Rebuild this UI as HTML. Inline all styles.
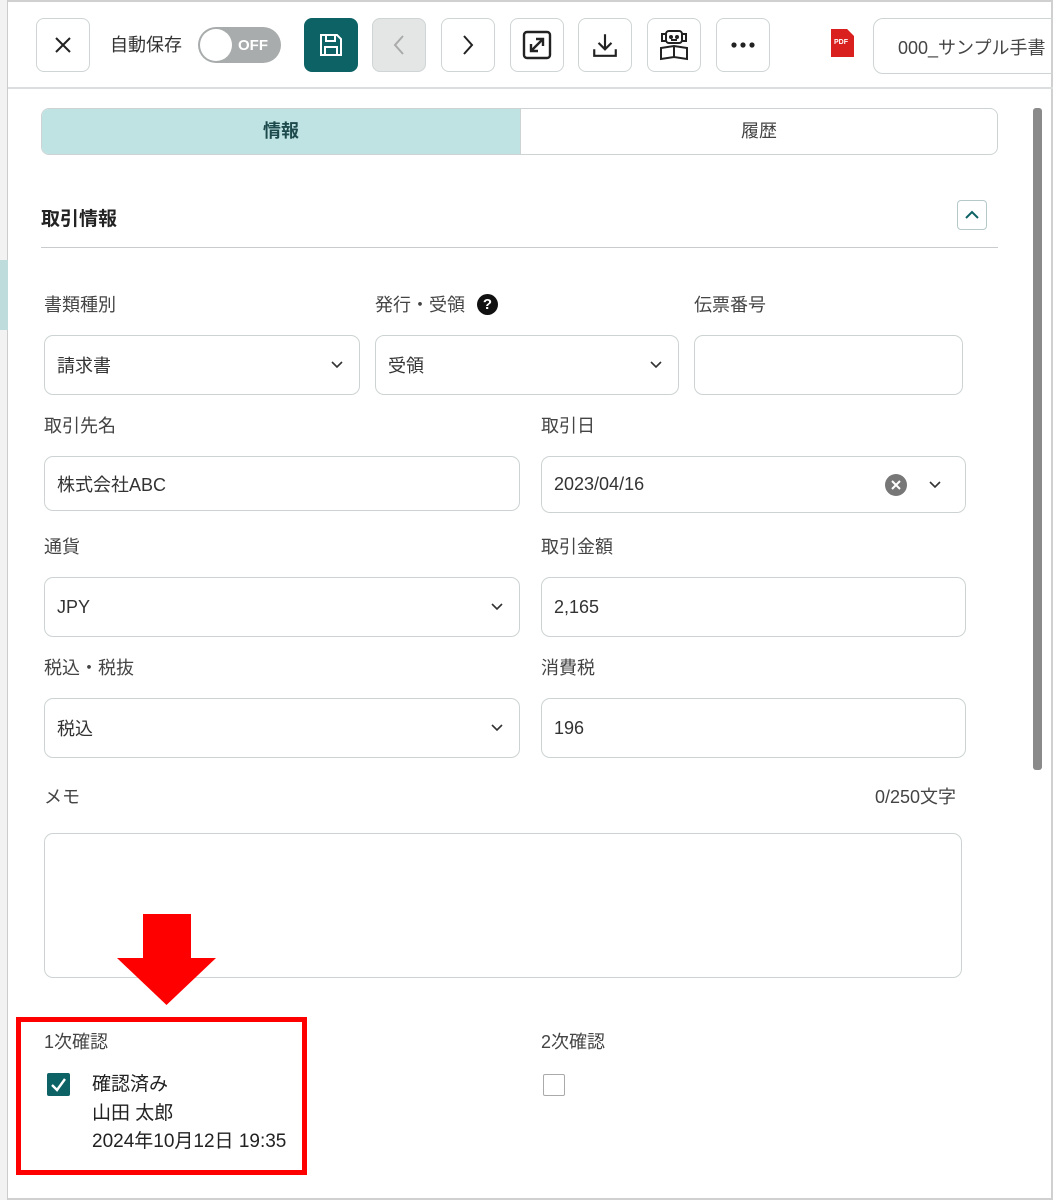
<!DOCTYPE html>
<html><head><meta charset="utf-8"><style>
*{box-sizing:border-box;margin:0;padding:0}
body{width:1053px;height:1200px;overflow:hidden;background:#fff;font-family:"Liberation Sans","Noto Sans CJK JP",sans-serif;color:#333;position:relative}
.a{position:absolute}
.btn{position:absolute;top:18px;width:54px;height:54px;border:1px solid #cfd4d4;border-radius:8px;background:#fff;display:flex;align-items:center;justify-content:center}
.lbl{position:absolute;font-size:18px;color:#444;line-height:1}
.inp{position:absolute;border:1px solid #cdd3d3;border-radius:9px;background:#fff;font-size:18px;color:#333;padding-left:12px;display:flex;align-items:center}
.chev{position:absolute;right:16px;top:50%;margin-top:-6px}
</style></head><body>
<div class="a" style="left:0;top:0;width:1053px;height:1200px;border:2px solid #d0d0d0;border-left:none"></div>
<div class="a" style="left:0;top:0;width:8px;height:1200px;background:#f2f2f2;border-right:1px solid #ccc"></div>
<div class="a" style="left:0;top:260px;width:8px;height:70px;background:#bfdcdc"></div>

<div class="btn" style="left:36px"><svg width="20" height="20" viewBox="0 0 20 20"><path d="M3 3L17 17M17 3L3 17" stroke="#222" stroke-width="2"/></svg></div>
<div class="lbl" style="left:110px;top:36px;color:#333">自動保存</div>
<div class="a" style="left:198px;top:27px;width:83px;height:36px;border-radius:18px;background:#a9acac"></div>
<div class="a" style="left:200px;top:29px;width:32px;height:32px;border-radius:50%;background:#fff"></div>
<div class="a" style="left:238px;top:37px;color:#fff;font-size:15px;font-weight:bold">OFF</div>
<div class="btn" style="left:304px;background:#0d6265;border-color:#0d6265"><svg width="26" height="26" viewBox="0 0 26 26" fill="none" stroke="#fff" stroke-width="2"><path d="M3 3H19L23 7V23H3Z"/><path d="M8 3V9H17V3"/><path d="M7 23V15H19V23"/></svg></div>
<div class="btn" style="left:372px;background:#e4e6e6"><svg width="14" height="22" viewBox="0 0 14 22"><path d="M11 2L3 11L11 20" stroke="#aaa" stroke-width="2" fill="none"/></svg></div>
<div class="btn" style="left:441px"><svg width="14" height="22" viewBox="0 0 14 22"><path d="M3 2L11 11L3 20" stroke="#222" stroke-width="2" fill="none"/></svg></div>
<div class="btn" style="left:510px"><svg width="30" height="30" viewBox="0 0 30 30" fill="none" stroke="#222" stroke-width="2.4"><rect x="2" y="2" width="26" height="26" rx="3"/><path d="M9 21L21 9M14 9H21V16M9 14V21H16"/></svg></div>
<div class="btn" style="left:578px"><svg width="28" height="28" viewBox="0 0 26 26" fill="none" stroke="#222" stroke-width="2"><path d="M13 3V17M7 11L13 17L19 11M3 17V23H23V17"/></svg></div>
<div class="btn" style="left:647px"><svg width="32" height="34" viewBox="0 0 32 34" fill="none" stroke="#222" stroke-width="2"><rect x="8" y="3" width="16" height="12" rx="3"/><rect x="4" y="6" width="4" height="7"/><rect x="24" y="6" width="4" height="7"/><circle cx="13" cy="9" r="1" fill="#222"/><circle cx="19" cy="9" r="1" fill="#222"/><path d="M13 12H19M3 20L16 18L29 20V31L16 29L3 31ZM16 18V29"/></svg></div>
<div class="btn" style="left:716px"><svg width="24" height="6" viewBox="0 0 24 6"><circle cx="3" cy="3" r="2.6" fill="#222"/><circle cx="12" cy="3" r="2.6" fill="#222"/><circle cx="21" cy="3" r="2.6" fill="#222"/></svg></div>
<div class="a" style="left:831px;top:29px;width:23px;height:28px;background:#d9201f;clip-path:polygon(0 0,70% 0,100% 25%,100% 100%,0 100%)"></div>
<div class="a" style="left:834px;top:39px;color:#fff;font-size:7px;font-weight:bold">PDF</div>
<div class="a" style="left:873px;top:18px;width:200px;height:56px;border:1px solid #cfd4d4;border-radius:10px;padding:15px 0 0 24px;font-size:18px;color:#444;white-space:nowrap">000_サンプル手書</div>
<div class="a" style="left:8px;top:87px;width:1045px;height:2px;background:#dadede"></div>

<div class="a" style="left:1033px;top:108px;width:9px;height:662px;background:#8a8a8a;border-radius:3px"></div>

<div class="a" style="left:41px;top:108px;width:957px;height:47px;border:1px solid #cdd3d3;border-radius:8px;overflow:hidden;display:flex">
<div style="width:478px;background:#bfe3e3;text-align:center;line-height:45px;font-size:18px;font-weight:bold;color:#1d4a4c">情報</div>
<div style="flex:1;text-align:center;line-height:45px;font-size:18px;color:#444;border-left:1px solid #cdd3d3">履歴</div></div>

<div class="a" style="left:41px;top:204px;font-size:19px;font-weight:bold;color:#222">取引情報</div>
<div class="a" style="left:957px;top:200px;width:30px;height:30px;border:1px solid #b5c9c9;border-radius:4px;display:flex;align-items:center;justify-content:center"><svg width="16" height="10" viewBox="0 0 16 10"><path d="M2 8L8 2L14 8" stroke="#0d6265" stroke-width="2" fill="none"/></svg></div>
<div class="a" style="left:41px;top:247px;width:957px;height:1px;background:#c8cccc"></div>

<div class="lbl" style="left:44px;top:296px">書類種別</div>
<div class="lbl" style="left:375px;top:296px">発行・受領</div>
<div class="a" style="left:477px;top:294px;width:21px;height:21px;border-radius:50%;background:#111;color:#fff;font-size:15px;font-weight:bold;text-align:center;line-height:21px">?</div>
<div class="lbl" style="left:694px;top:296px">伝票番号</div>
<div class="inp" style="left:44px;top:335px;width:316px;height:60px">請求書<svg class="chev" width="12" height="10" viewBox="0 0 12 10"><path d="M1 3L6 8L11 3" stroke="#333" stroke-width="1.6" fill="none"/></svg></div>
<div class="inp" style="left:375px;top:335px;width:304px;height:60px">受領<svg class="chev" width="12" height="10" viewBox="0 0 12 10"><path d="M1 3L6 8L11 3" stroke="#333" stroke-width="1.6" fill="none"/></svg></div>
<div class="inp" style="left:694px;top:335px;width:269px;height:60px"></div>

<div class="lbl" style="left:44px;top:417px">取引先名</div>
<div class="lbl" style="left:541px;top:417px">取引日</div>
<div class="inp" style="left:44px;top:456px;width:476px;height:55px">株式会社ABC</div>
<div class="inp" style="left:541px;top:456px;width:425px;height:57px">2023/04/16
<div class="a" style="right:58px;top:17px;width:22px;height:22px;border-radius:50%;background:#777"><svg width="22" height="22" viewBox="0 0 22 22"><path d="M7 7L15 15M15 7L7 15" stroke="#fff" stroke-width="2"/></svg></div>
<svg class="chev" style="right:24px" width="12" height="10" viewBox="0 0 12 10"><path d="M1 3L6 8L11 3" stroke="#333" stroke-width="1.6" fill="none"/></svg></div>

<div class="lbl" style="left:44px;top:538px">通貨</div>
<div class="lbl" style="left:541px;top:538px">取引金額</div>
<div class="inp" style="left:44px;top:577px;width:476px;height:60px">JPY<svg class="chev" width="12" height="10" viewBox="0 0 12 10"><path d="M1 3L6 8L11 3" stroke="#333" stroke-width="1.6" fill="none"/></svg></div>
<div class="inp" style="left:541px;top:577px;width:425px;height:60px">2,165</div>

<div class="lbl" style="left:44px;top:659px">税込・税抜</div>
<div class="lbl" style="left:541px;top:659px">消費税</div>
<div class="inp" style="left:44px;top:698px;width:476px;height:60px">税込<svg class="chev" width="12" height="10" viewBox="0 0 12 10"><path d="M1 3L6 8L11 3" stroke="#333" stroke-width="1.6" fill="none"/></svg></div>
<div class="inp" style="left:541px;top:698px;width:425px;height:60px">196</div>

<div class="lbl" style="left:44px;top:788px">メモ</div>
<div class="lbl" style="left:875px;top:788px">0/250文字</div>
<div class="inp" style="left:44px;top:833px;width:918px;height:145px"></div>

<div class="a" style="left:143px;top:914px;width:48px;height:46px;background:#f00"></div>
<div class="a" style="left:117px;top:958px;width:99px;height:47px;background:#f00;clip-path:polygon(0 0,100% 0,50% 100%)"></div>
<div class="a" style="left:16px;top:1017px;width:291px;height:158px;border:5px solid #f00"></div>

<div class="lbl" style="left:44px;top:1033px">1次確認</div>
<div class="a" style="left:47px;top:1073px;width:23px;height:23px;background:#0d6265;border-radius:2px"><svg width="23" height="23" viewBox="0 0 23 23"><path d="M5 12L10 17L18 6" stroke="#fff" stroke-width="2.4" fill="none"/></svg></div>
<div class="a" style="left:92px;top:1071px;font-size:19px;color:#222;line-height:28.5px">確認済み<br>山田 太郎<br>2024年10月12日 19:35</div>
<div class="lbl" style="left:541px;top:1033px">2次確認</div>
<div class="a" style="left:543px;top:1074px;width:22px;height:22px;border:1.5px solid #aaa;border-radius:2px"></div>
</body></html>
